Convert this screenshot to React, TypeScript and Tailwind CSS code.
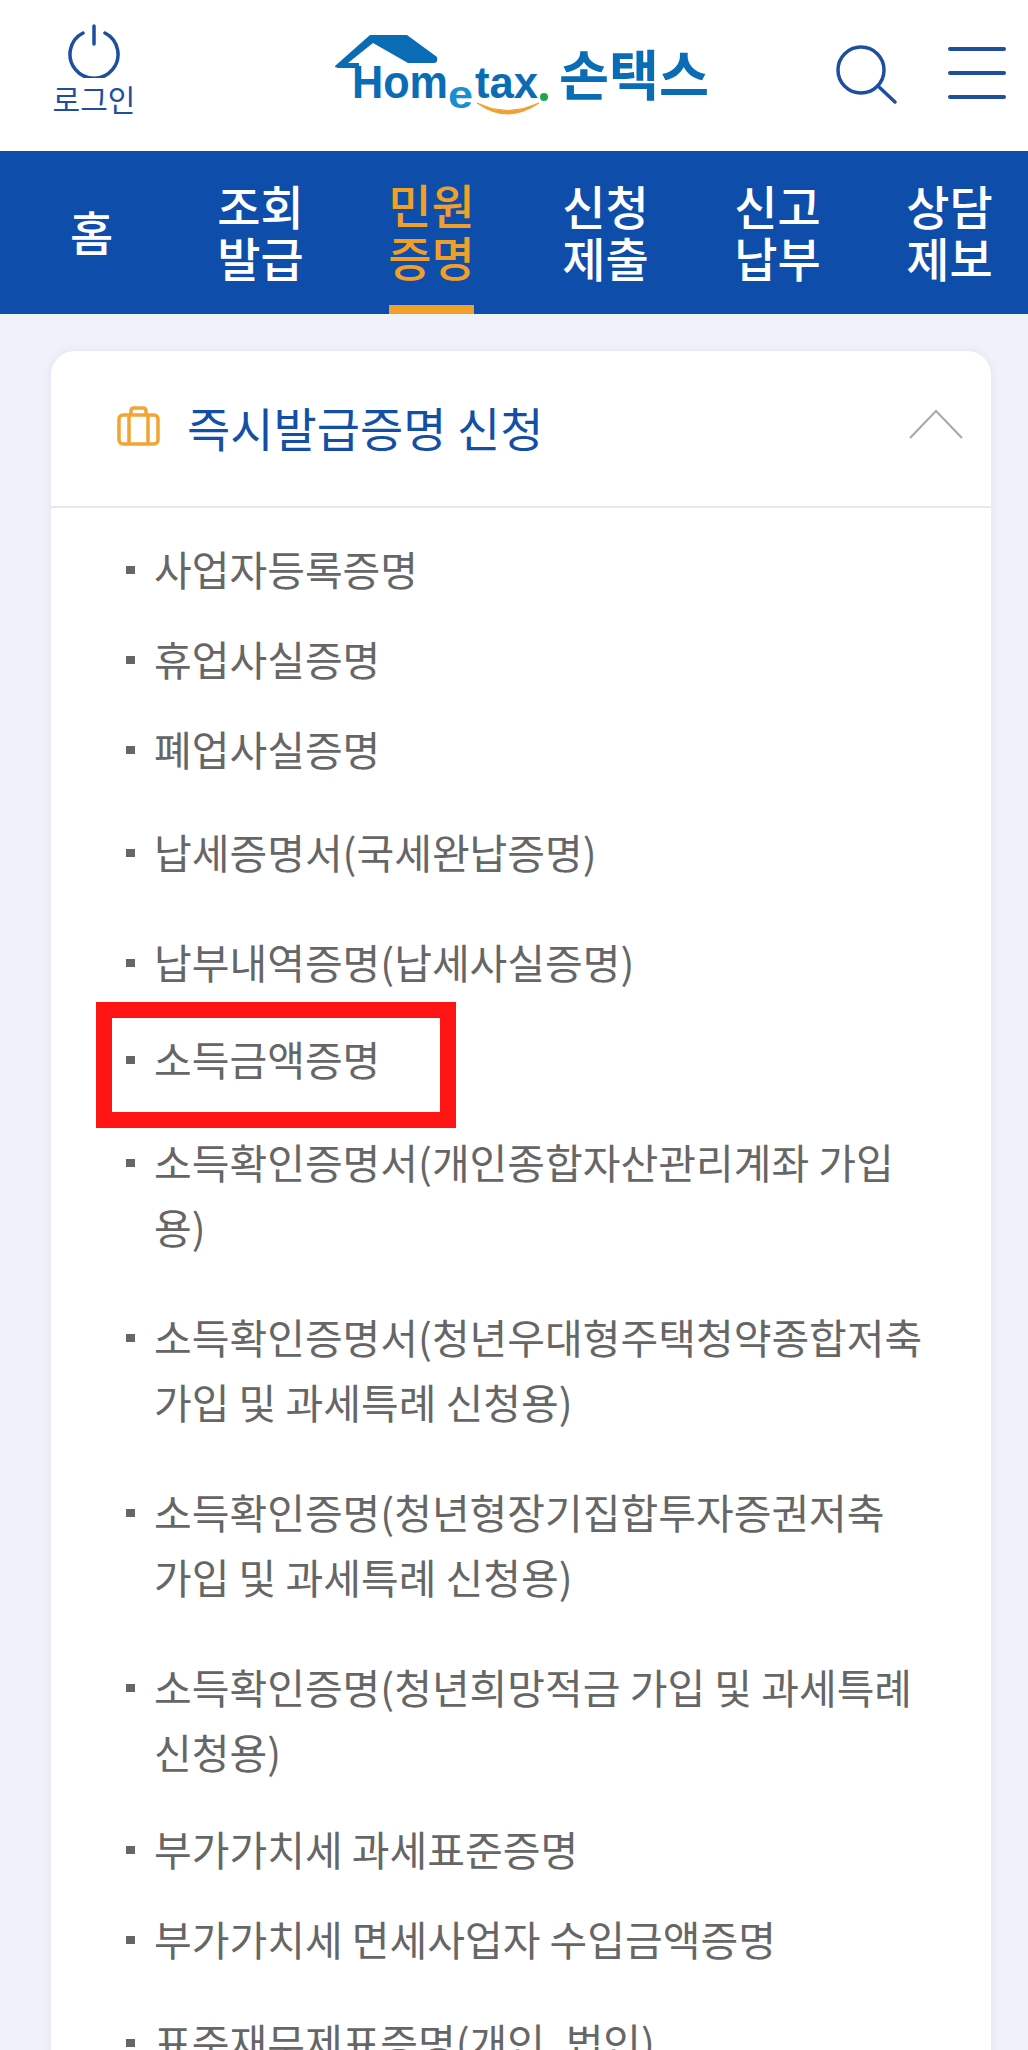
const F = "font-['Noto_Sans_CJK_KR','Noto_Sans',sans-serif]";

const nav: { a: string; b: string; ml: string }[] = [
  { a: "조회", b: "발급", ml: "ml-[86px]" },
  { a: "민원", b: "증명", ml: "ml-[86px]" },
  { a: "신청", b: "제출", ml: "ml-[89px]" },
  { a: "신고", b: "납부", ml: "ml-[87px]" },
  { a: "상담", b: "제보", ml: "ml-[87px]" },
];

const items: { lines: string[]; cls: string; boxed?: boolean }[] = [
  { lines: ["사업자등록증명"], cls: "mt-[28px]" },
  { lines: ["휴업사실증명"], cls: "mt-[25px]" },
  { lines: ["폐업사실증명"], cls: "mt-[25px]" },
  { lines: ["납세증명서(국세완납증명)"], cls: "mt-[38px]" },
  { lines: ["납부내역증명(납세사실증명)"], cls: "mt-[45px]" },
  { lines: ["소득금액증명"], cls: "mt-[32px]", boxed: true },
  { lines: ["소득확인증명서(개인종합자산관리계좌 가입", "용)"], cls: "mt-[38px]" },
  { lines: ["소득확인증명서(청년우대형주택청약종합저축", "가입 및 과세특례 신청용)"], cls: "mt-[45px]" },
  { lines: ["소득확인증명(청년형장기집합투자증권저축", "가입 및 과세특례 신청용)"], cls: "mt-[45px]" },
  { lines: ["소득확인증명(청년희망적금 가입 및 과세특례", "신청용)"], cls: "mt-[45px]" },
  { lines: ["부가가치세 과세표준증명"], cls: "mt-[32px]" },
  { lines: ["부가가치세 면세사업자 수입금액증명"], cls: "mt-[25px]" },
  { lines: ["표준재무제표증명(개인, 법인)"], cls: "mt-[38px]" },
];

function Logo() {
  return (
    <svg width="380" height="100" viewBox="0 0 380 100" className="block">
      <path d="M0 38 L35 7 H72 L102 29 Q103 35 99 35 H73 L38 15 L13 35 H24 L24 40 H3 Q-1 39 0 38Z" fill="#0a6cb5" />
      <text x="17" y="70" fontFamily="'Liberation Sans',sans-serif" fontWeight="700" fontSize="46" fill="#0a6cb5" textLength="96" lengthAdjust="spacingAndGlyphs">Hom</text>
      <text x="113" y="80" fontFamily="'Liberation Sans',sans-serif" fontWeight="700" fontSize="38" fill="#1a8fd0" textLength="25" lengthAdjust="spacingAndGlyphs">e</text>
      <text x="140" y="70" fontFamily="'Liberation Sans',sans-serif" fontWeight="700" fontSize="44" fill="#0a6cb5" textLength="63" lengthAdjust="spacingAndGlyphs">tax</text>
      <circle cx="209" cy="69" r="4" fill="#1ea64a" />
      <path d="M142 75 Q172 97 204 75 Q172 90 142 75Z" fill="#f0a030" stroke="#f0a030" strokeWidth="1" />
      <text x="224" y="68" fontFamily="'Noto Sans CJK KR',sans-serif" fontWeight="700" fontSize="54" fill="#0a6cb5" textLength="150" lengthAdjust="spacingAndGlyphs">손택스</text>
    </svg>
  );
}

export default function App() {
  return (
    <div className={`${F} h-[2050px] overflow-hidden bg-[#f0f2f9]`}>
      <header className="flex h-[151px] items-start bg-white">
        <div className="ml-[52px] mt-[24px] flex w-[84px] flex-col items-center">
          <svg width="52" height="54" viewBox="0 0 52 54" fill="none" stroke="#1d4f9e" strokeWidth="3.5" strokeLinecap="round">
            <path d="M15 9 A24 24 0 1 0 37 9" />
            <path d="M26 2 V20" />
          </svg>
          <span className="mt-[2px] whitespace-nowrap text-[30px] leading-[36px] text-[#1d4f9e]">로그인</span>
        </div>
        <div className="ml-[199px] mt-[28px]">
          <Logo />
        </div>
        <svg className="ml-[120px] mt-[44px] shrink-0" width="64" height="62" viewBox="0 0 64 62" fill="none" stroke="#1d4f9e" strokeWidth="3.5" strokeLinecap="round">
          <circle cx="26" cy="26" r="23" />
          <path d="M43 42 L60 58" />
        </svg>
        <div className="ml-[49px] mt-[47px] flex w-[58px] shrink-0 flex-col gap-[20px]">
          <div className="h-[4px] rounded-full bg-[#1d4f9e]" />
          <div className="h-[4px] rounded-full bg-[#1d4f9e]" />
          <div className="h-[4px] rounded-full bg-[#1d4f9e]" />
        </div>
      </header>

      <nav className="flex h-[163px] items-stretch overflow-hidden bg-[#0f4dab] pl-[70px] text-[47px] font-medium leading-[52px] text-white">
        <div className="mr-[19px] flex h-full w-[43px] items-center justify-center pb-[4px]">홈</div>
        {nav.map(({ a, b, ml }) => (
          <div key={a} className={`${ml} flex h-full w-[85px] shrink-0 flex-col items-center justify-center whitespace-nowrap pb-[4px] ${a === "민원" ? "border-b-[9px] border-[#f0a028] pt-[7px] text-[#f0a028]" : ""}`}>
            <span>{a}</span>
            <span>{b}</span>
          </div>
        ))}
      </nav>

      <main className="ml-[51px] mr-[37px] mt-[37px] rounded-t-[24px] bg-white shadow-[0_0_10px_rgba(40,60,120,0.08)]">
        <div className="flex h-[157px] items-center border-b-2 border-[#e8e8ec] pb-[6px]">
          <svg className="ml-[66px] shrink-0" width="44" height="42" viewBox="0 0 44 42" fill="none" stroke="#f0a535" strokeWidth="3.5" strokeLinejoin="round">
            <rect x="2" y="10" width="39" height="29" rx="4" />
            <path d="M12 10 V39 M31 10 V39" />
            <path d="M14 10 V6 Q14 3 17 3 H26 Q29 3 29 6 V10" />
          </svg>
          <h1 className="ml-[26px] mt-[3px] whitespace-nowrap text-[47px] font-normal leading-[52px] text-[#1350a5]">즉시발급증명 신청</h1>
          <svg className="ml-auto mr-[28px] mt-[-4px] shrink-0" width="54" height="30" viewBox="0 0 54 30" fill="none" stroke="#a8a8a8" strokeWidth="2">
            <path d="M1 29 L27 2 L53 29" />
          </svg>
        </div>
        <ul className="text-[41px] leading-[65px] text-[#666666]">
          {items.map((it) => (
            <li key={it.lines[0]} className={`relative flex whitespace-nowrap pl-[75px] ${it.cls}`}>
              <span className="mt-[30px] h-[8px] w-[9px] shrink-0 bg-[#666666]" />
              <div className="ml-[19px]">
                {it.lines.map((l) => (
                  <div key={l}>{l}</div>
                ))}
              </div>
              {it.boxed && <div className="absolute left-[45px] top-[-24px] h-[126px] w-[360px] border-[16px] border-[#ff1414]" />}
            </li>
          ))}
        </ul>
      </main>
    </div>
  );
}
